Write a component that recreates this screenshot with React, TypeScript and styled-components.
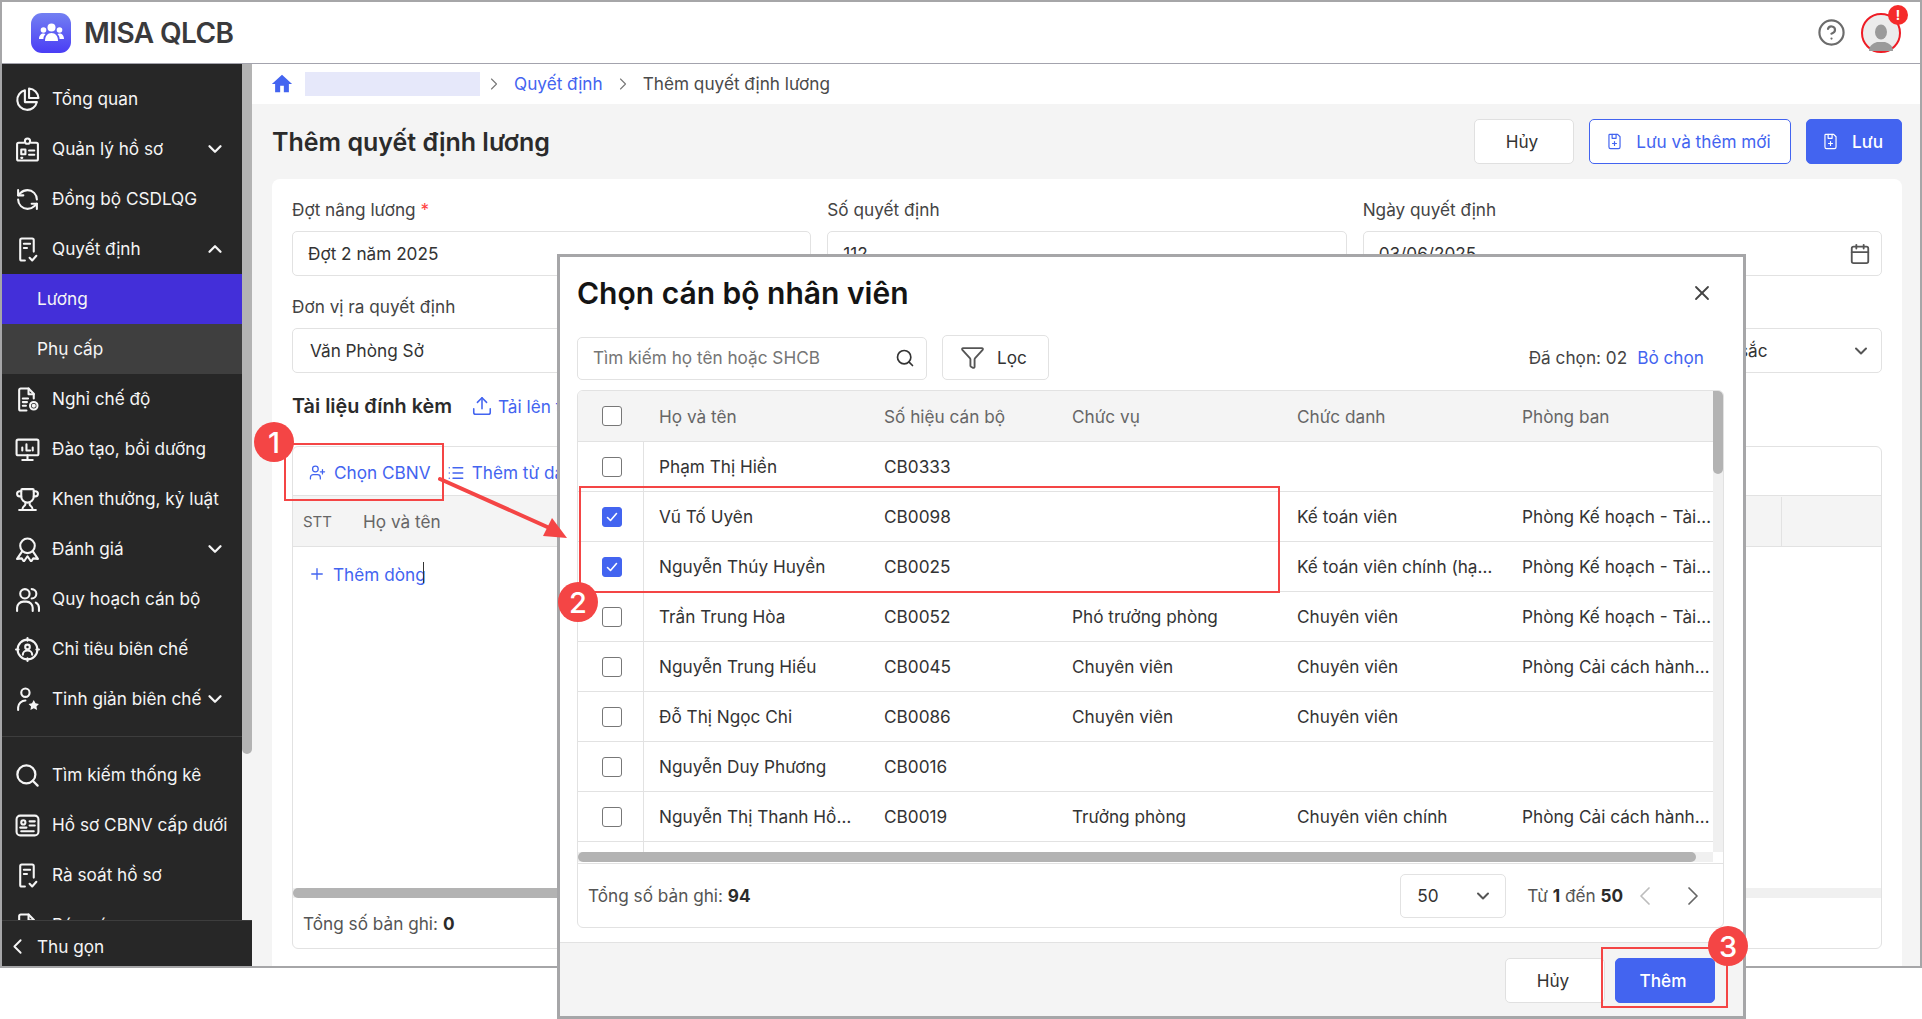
import styled, { createGlobalStyle } from 'styled-components';
import { ReactNode } from 'react';
import { ChevronDown, ChevronUp, ChevronLeft, ChevronRight, RefreshCcw, Trophy, Search, X, Plus, List, Upload, Calendar, UserPlus, CircleHelp, Funnel } from 'lucide-react';

const BLUE = '#4364f0';
const RED = '#f44545';
const LINE = '#e2e2e2';
const TEXT_SIZE = '17.2px';

const GlobalStyle = createGlobalStyle`
  html, body {
    margin: 0;
    background: #fff;
    overflow: hidden;
  }
  body, button, input {
    font-family: Inter, "Noto Sans", sans-serif;
    color: #333;
  }
  * { box-sizing: border-box; }
`;

const Screen = styled.div`
  position: relative;
  width: 1922px;
  height: 1019px;
  background: #fff;
  overflow: hidden;
`;

const Frame = styled.div`
  width: 100%;
  height: 968px;
  border: 2px solid #a6a6a8;
  display: flex;
  flex-direction: column;
`;

const TopBar = styled.header`
  height: 62px;
  flex: none;
  background: #fff;
  border-bottom: 1px solid #a3a3ad;
  display: flex;
  align-items: center;
  padding: 0 0 0 29px;
`;

const LogoMark = styled.div`
  width: 40px;
  height: 40px;
  border-radius: 11px;
  background: linear-gradient(180deg, #7380f2 0%, #4a3df5 100%);
  display: flex;
  align-items: center;
  justify-content: center;
`;

const LogoText = styled.div`
  margin-left: 13px;
  font-size: 28px;
  font-weight: 600;
  color: #3a3a3c;
  letter-spacing: -0.6px;
`;

const TopRight = styled.div`
  margin-left: auto;
  display: flex;
  align-items: center;
  color: #6c6c6c;
  gap: 15px;
  padding-right: 19px;
`;

const AvatarRing = styled.div`
  position: relative;
  width: 40px;
  height: 40px;
  border-radius: 50%;
  border: 2px solid #ee1c25;
  background: #ececec;
  display: flex;
  align-items: flex-end;
  justify-content: center;
`;

const AlertDot = styled.span`
  position: absolute;
  top: -10px;
  right: -9px;
  width: 20px;
  height: 20px;
  border-radius: 50%;
  background: #f52b2b;
  color: #fff;
  font-size: 13px;
  font-weight: 700;
  display: flex;
  align-items: center;
  justify-content: center;
`;

const Body = styled.div`
  flex: 1;
  display: flex;
  min-height: 0;
`;

const Sidebar = styled.aside`
  width: 250px;
  flex: none;
  display: flex;
  flex-direction: column;
`;

const SideScroll = styled.div`
  flex: 1;
  min-height: 0;
  display: flex;
  background: #f4f4f4;
`;

const Nav = styled.nav`
  width: 240px;
  background: #272727;
  padding-top: 10px;
  overflow: hidden;
`;

const NavRow = styled.div<{ $active?: boolean; $sub?: boolean }>`
  height: 50px;
  display: flex;
  align-items: center;
  padding-left: ${p => (p.$sub ? '35px' : '13px')};
  padding-right: 16px;
  color: #f5f5f5;
  font-size: ${TEXT_SIZE};
  line-height: 20px;
  white-space: nowrap;
  background: ${p => (p.$active ? '#432fd9' : p.$sub ? '#3f3f3f' : 'transparent')};
  svg {
    flex: none;
  }
`;

const NavIcon = styled.span`
  width: 25px;
  height: 25px;
  margin-right: 12px;
  display: flex;
  align-items: center;
  justify-content: center;
`;

const NavCaret = styled.span`
  margin-left: auto;
  display: flex;
`;

const NavDivider = styled.div`
  height: 1px;
  background: #3d3d3d;
  margin: 12px 0 13px;
`;

const SideTrack = styled.div`
  width: 10px;
  flex: none;
`;

const SideThumb = styled.div`
  height: 690px;
  background: #b3b3b3;
  border-radius: 0 0 5px 5px;
`;

const Collapse = styled.div`
  height: 46px;
  flex: none;
  background: #272727;
  border-top: 1px solid #3d3d3d;
  display: flex;
  align-items: center;
  gap: 7px;
  padding: 5px 0 0 3px;
  color: #f5f5f5;
  font-size: ${TEXT_SIZE};
`;

const Main = styled.main`
  flex: 1;
  min-width: 0;
  background: #f4f4f4;
  display: flex;
  flex-direction: column;
`;

const Crumbs = styled.div`
  height: 40px;
  flex: none;
  background: #fff;
  display: flex;
  align-items: center;
  padding-left: 19px;
  font-size: ${TEXT_SIZE};
  line-height: 20px;
  color: #4a4a4a;
`;

const Redacted = styled.div`
  width: 175px;
  height: 24px;
  margin: 0 -6px 0 12px;
  background: #e6e8fa;
`;

const CrumbSep = styled.span`
  display: flex;
  color: #777;
  margin: 0 10px;
`;

const CrumbLink = styled.span`
  color: ${BLUE};
`;

const TitleRow = styled.div`
  height: 75px;
  flex: none;
  display: flex;
  align-items: center;
  justify-content: space-between;
  padding: 0 18px 0 20px;
`;

const PageTitle = styled.h1`
  margin: 0;
  font-size: 25px;
  font-weight: 600;
  color: #2b2b2b;
`;

const Actions = styled.div`
  display: flex;
  gap: 15px;
`;

const Btn = styled.button<{ $kind?: 'default' | 'outline' | 'primary'; $w: number }>`
  width: ${p => p.$w}px;
  height: 45px;
  border-radius: 5px;
  font-size: ${TEXT_SIZE};
  font-weight: ${p => (p.$kind === 'primary' ? 500 : 400)};
  display: flex;
  align-items: center;
  justify-content: center;
  gap: 12px;
  padding: 0 4px 0 0;
  border: 1px solid ${p => (p.$kind === 'outline' ? BLUE : p.$kind === 'primary' ? BLUE : '#e0e0e0')};
  background: ${p => (p.$kind === 'primary' ? BLUE : '#fff')};
  color: ${p => (p.$kind === 'primary' ? '#fff' : p.$kind === 'outline' ? BLUE : '#333')};
`;

const Card = styled.section`
  flex: 1;
  min-height: 0;
  margin: 0 18px 0 20px;
  background: #fff;
  border-radius: 8px 8px 0 0;
  padding: 19px 20px 17px;
  display: flex;
  flex-direction: column;
`;

const FormGrid = styled.div`
  display: grid;
  grid-template-columns: repeat(3, 1fr);
  column-gap: 16px;
  row-gap: 19px;
`;

const Field = styled.div`
  display: flex;
  flex-direction: column;
  gap: 9px;
  min-width: 0;
`;

const FieldLabel = styled.label`
  height: 24px;
  line-height: 24px;
  font-size: ${TEXT_SIZE};
  color: #444;
  em {
    color: #f44;
    font-style: normal;
  }
`;

const InputBox = styled.div<{ $inset?: number }>`
  height: 45px;
  border: 1px solid ${LINE};
  border-radius: 5px;
  display: flex;
  align-items: center;
  justify-content: space-between;
  padding: 0 10px 0 ${p => p.$inset ?? 15}px;
  font-size: ${TEXT_SIZE};
  color: #333;
  background: #fff;
  white-space: nowrap;
  overflow: hidden;
`;

const AttachRow = styled.div`
  height: 30px;
  margin: 18px 0 25px;
  display: flex;
  align-items: center;
  font-size: ${TEXT_SIZE};
`;

const AttachTitle = styled.strong`
  font-weight: 600;
  font-size: 19.8px;
  color: #2b2b2b;
  margin-right: 19px;
`;

const LinkText = styled.span<{ $gap?: number }>`
  color: ${BLUE};
  display: inline-flex;
  align-items: center;
  gap: ${p => p.$gap ?? 5}px;
  font-size: ${TEXT_SIZE};
  white-space: nowrap;
`;

const DetailTable = styled.div`
  flex: 1;
  min-height: 0;
  border: 1px solid ${LINE};
  border-radius: 6px;
  display: flex;
  flex-direction: column;
  overflow: hidden;
`;

const DetailTools = styled.div`
  height: 49px;
  flex: none;
  border-bottom: 1px solid ${LINE};
  display: flex;
  align-items: center;
  padding: 3px 0 0 16px;
  gap: 16px;
`;

const DetailHead = styled.div`
  height: 51px;
  flex: none;
  background: #f4f4f4;
  border-bottom: 1px solid ${LINE};
  display: grid;
  grid-template-columns: 60px 1fr 100px;
  align-items: center;
  padding: 1px 0 0 10px;
  color: #666;
  font-size: ${TEXT_SIZE};
`;

const Stt = styled.span`
  font-size: 15px;
  color: #666;
`;

const HeadEnd = styled.span`
  height: 100%;
  border-left: 1px solid ${LINE};
`;

const DetailBody = styled.div`
  flex: 1;
  min-height: 0;
  padding: 15px 0 0 15px;
`;

const Caret = styled.span`
  display: inline-block;
  width: 1px;
  height: 21px;
  background: #333;
  margin-left: -3px;
`;

const HBar = styled.div`
  height: 10px;
  flex: none;
  background: #f0f0f0;
`;

const HThumb = styled.div<{ $w: string }>`
  width: ${p => p.$w};
  height: 100%;
  background: #b3b3b3;
  border-radius: 5px;
`;

const DetailFoot = styled.div`
  height: 50px;
  flex: none;
  display: flex;
  align-items: center;
  padding-left: 10px;
  font-size: ${TEXT_SIZE};
  color: #555;
  b {
    color: #2b2b2b;
    margin-left: 5px;
    font-weight: 700;
  }
`;

const Modal = styled.div`
  position: absolute;
  left: 557px;
  top: 254px;
  width: 1189px;
  height: 765px;
  border: 3px solid #a6a6a8;
  background: #fff;
  display: flex;
  flex-direction: column;
`;

const ModalHead = styled.div`
  height: 78px;
  flex: none;
  display: flex;
  align-items: center;
  justify-content: space-between;
  padding: 0 29px 6px 17px;
  color: #444;
`;

const ModalTitle = styled.h2`
  margin: 0;
  font-size: 30px;
  font-weight: 600;
  color: #141414;
`;

const ModalTools = styled.div`
  height: 45px;
  flex: none;
  display: flex;
  align-items: center;
  padding: 0 39px 0 17px;
`;

const SearchBox = styled.div`
  width: 350px;
  height: 43px;
  margin-top: 2px;
  border: 1px solid ${LINE};
  border-radius: 5px;
  display: flex;
  align-items: center;
  justify-content: space-between;
  padding: 0 11px 2px 15px;
  font-size: ${TEXT_SIZE};
  color: #757575;
`;

const FilterBtn = styled.button`
  width: 107px;
  height: 45px;
  margin-left: 15px;
  border: 1px solid ${LINE};
  border-radius: 5px;
  background: #fff;
  display: flex;
  align-items: center;
  justify-content: center;
  gap: 12px;
  padding: 0 4px 0 0;
  font-size: ${TEXT_SIZE};
  color: #333;
`;

const Picked = styled.div`
  margin-left: auto;
  display: flex;
  gap: 10px;
  font-size: ${TEXT_SIZE};
  color: #444;
`;

const PickGrid = styled.div`
  margin: 10px 19px 0 17px;
  height: 538px;
  border: 1px solid ${LINE};
  border-radius: 6px;
  overflow: hidden;
  flex: none;
  display: flex;
  flex-direction: column;
`;

const PickScroll = styled.div`
  flex: none;
  height: 472px;
  display: grid;
  grid-template-columns: 1fr 10px;
  grid-template-rows: 461px 10px;
`;

const PickRows = styled.div`
  overflow: hidden;
  min-width: 0;
`;

const PickRow = styled.div<{ $head?: boolean }>`
  height: ${p => (p.$head ? '51px' : '50px')};
  display: grid;
  grid-template-columns: 66px 225px 188px 225px 225px 1fr;
  align-items: stretch;
  background: ${p => (p.$head ? '#f4f4f4' : '#fff')};
  border-bottom: 1px solid ${LINE};
  color: ${p => (p.$head ? '#666' : '#333')};
  font-size: ${TEXT_SIZE};
`;

const CheckCell = styled.div<{ $head?: boolean }>`
  display: flex;
  align-items: center;
  padding-left: 24px;
  border-right: ${p => (p.$head ? 'none' : `1px solid ${LINE}`)};
`;

const TextCell = styled.div`
  display: flex;
  align-items: center;
  padding: 0 11px 0 15px;
  min-width: 0;
  span {
    overflow: hidden;
    white-space: nowrap;
    text-overflow: ellipsis;
  }
  &:nth-child(2) {
    padding-right: 14px;
  }
  &:last-child {
    padding-right: 0;
  }
`;

const Check = styled.span<{ $on?: boolean }>`
  width: 20px;
  height: 20px;
  border-radius: 3px;
  border: 1px solid ${p => (p.$on ? BLUE : '#777')};
  background: ${p => (p.$on ? BLUE : '#fff')};
  display: flex;
  align-items: center;
  justify-content: center;
`;

const VTrack = styled.div`
  background: #f0f0f0;
`;

const VThumb = styled.div`
  height: 83px;
  background: #b3b3b3;
  border-radius: 0 0 5px 5px;
`;

const CornerFill = styled.div`
  background: #fff;
`;

const PickFoot = styled.div`
  flex: 1;
  border-top: 1px solid ${LINE};
  display: flex;
  align-items: center;
  padding: 0 14px 0 10px;
  font-size: ${TEXT_SIZE};
  color: #555;
  b {
    font-weight: 700;
    color: #2b2b2b;
  }
`;

const PageSize = styled.div`
  margin-left: auto;
  width: 106px;
  height: 44px;
  border: 1px solid ${LINE};
  border-radius: 5px;
  display: flex;
  align-items: center;
  justify-content: space-between;
  padding: 0 12px 0 16px;
  color: #333;
`;

const RangeText = styled.span`
  margin-left: 21px;
`;

const Pager = styled.span<{ $off?: boolean }>`
  display: flex;
  color: ${p => (p.$off ? '#bdbdbd' : '#666')};
  margin-left: ${p => (p.$off ? '6px' : '16px')};
`;

const ModalFoot = styled.div`
  flex: 1;
  margin-top: 14px;
  background: #f4f4f4;
  border-top: 1px solid ${LINE};
  display: flex;
  justify-content: flex-end;
  align-items: flex-start;
  gap: 10px;
  padding: 15px 28px 0 0;
`;

const Callout = styled.div<{ $x: number; $y: number; $w: number; $h: number }>`
  position: absolute;
  left: ${p => p.$x}px;
  top: ${p => p.$y}px;
  width: ${p => p.$w}px;
  height: ${p => p.$h}px;
  border: 2px solid ${RED};
`;

const Step = styled.div<{ $x: number; $y: number }>`
  position: absolute;
  left: ${p => p.$x - 20}px;
  top: ${p => p.$y - 20}px;
  width: 40px;
  height: 40px;
  border-radius: 50%;
  background: ${RED};
  color: #fff;
  font-size: 29px;
  font-weight: 500;
  display: flex;
  align-items: center;
  justify-content: center;
`;

const ArrowSvg = styled.svg`
  position: absolute;
  left: 430px;
  top: 470px;
`;

const Line = ({ children, size = 25, stroke = 2 }: { children: ReactNode; size?: number; stroke?: number }) => (
  <svg width={size} height={size} viewBox="0 0 24 24" fill="none" stroke="currentColor" strokeWidth={stroke} strokeLinecap="round" strokeLinejoin="round">
    {children}
  </svg>
);

const HomeGlyph = () => (
  <svg width="22" height="22" viewBox="0 0 24 24" fill={BLUE}>
    <path d="M10 21v-7h4v7h5.500v-9H23L12 2 1 12h3.500v9Z" />
  </svg>
);

const PieIcon = () => (
  <Line>
    <path d="M9.5 3.2A9.5 9.5 0 1 0 21 14.5H9.5Z" />
    <path d="M13.5 1.5A9.5 9.5 0 0 1 22.5 10.5H13.5Z" />
  </Line>
);

const ProfileIcon = () => (
  <Line>
    <path d="M8.5 5.5H3.5A1.5 1.5 0 0 0 2 7v14a1.5 1.5 0 0 0 1.5 1.5h17A1.5 1.5 0 0 0 22 21V7a1.5 1.5 0 0 0-1.5-1.5h-5" />
    <circle cx="12" cy="4" r="2.5" />
    <rect x="6" y="12" width="4" height="4.5" />
    <path d="M13.5 13h5M13.5 17h5M6 20h1" />
  </Line>
);

const DecisionIcon = () => (
  <Line>
    <path d="M9.5 22.5H6.5A1.5 1.5 0 0 1 5 21V3A1.5 1.5 0 0 1 6.5 1.5h10A1.5 1.5 0 0 1 18 3v11" />
    <path d="M8.5 6.5h6M8.5 10.5h3" />
    <path d="M14 20l2.5 2.5 4-4.5" />
  </Line>
);

const LeaveIcon = () => (
  <Line>
    <path d="M11 22.5H5.5A1.5 1.5 0 0 1 4 21V3a1.5 1.5 0 0 1 1.5-1.5H13l5 5V11" />
    <path d="M13 1.5V7h5" />
    <path d="M7.5 11h5M7.5 14.5h4M7.5 18h3" />
    <circle cx="18" cy="18" r="3.6" />
    <circle cx="18" cy="18" r="1" />
  </Line>
);

const ScreenIcon = () => (
  <Line>
    <rect x="1.5" y="2.5" width="21" height="15" rx="1.5" />
    <path d="M7 13V10M11 13V7M14.5 13h-2M17 13v-3M12 17.5v4.5M7 22h10" />
  </Line>
);

const RibbonIcon = () => (
  <Line>
    <circle cx="12" cy="8.500" r="7" />
    <path d="M7 13.500L2 21l4.500-.5L8.500 23.500 12 18.500l3.500 5 2-3 4.500.5-5-7.500" />
  </Line>
);

const PeopleIcon = () => (
  <Line>
    <circle cx="9.5" cy="6.5" r="4.5" />
    <path d="M2 23v-3a6 6 0 0 1 6-6h3a6 6 0 0 1 6 6v3" />
    <path d="M16 2a4.5 4.5 0 0 1 0 9" />
    <path d="M20 15a5.5 5.5 0 0 1 3 5v3" />
  </Line>
);

const TargetIcon = () => (
  <Line>
    <circle cx="12" cy="12" r="9.5" />
    <path d="M12 1v2.5M12 20.5V23M1 12h2.5M20.5 12H23" />
    <circle cx="12" cy="9.5" r="2.2" />
    <path d="M7.5 17a4.5 4 0 0 1 9 0" />
  </Line>
);

const StarPersonIcon = () => (
  <Line>
    <circle cx="10" cy="5.5" r="4" />
    <path d="M3 22v-2.5A7 7 0 0 1 10 13" />
    <path d="M18 12.5l1.7 3.2 3.3.5-2.4 2.4.6 3.4-3.2-1.7-3.2 1.7.6-3.4-2.4-2.4 3.3-.5Z" fill="currentColor" stroke="none" />
  </Line>
);

const CardIcon = () => (
  <Line>
    <rect x="1.5" y="2.5" width="21" height="19" rx="3.5" />
    <circle cx="8" cy="9" r="2" />
    <path d="M5 14h6M14 8h5M14 12h5M6 17.5h12" />
  </Line>
);

const SaveIcon = () => (
  <Line size={19} stroke={1.5}>
    <path d="M6 3h10l3 3v13a2 2 0 0 1-2 2H7a2 2 0 0 1-2-2V4a1 1 0 0 1 1-1Z" />
    <path d="M9 3v5h5V3M12 12v5M9.5 14.5h5" />
  </Line>
);

const LogoPeople = () => (
  <svg width="27" height="22" viewBox="0 0 27 22" fill="#fff">
    <circle cx="13.5" cy="5.5" r="4" />
    <circle cx="5.5" cy="8" r="2.8" />
    <circle cx="21.5" cy="8" r="2.8" />
    <path d="M7 19c0-5 2.5-8 6.5-8s6.5 3 6.5 8Z" />
    <path d="M1 17c0-3.500 2-5.500 4.500-5.500 1 0 1.500.2 2 .5C6 13.500 5.500 15 5.400 17Z" />
    <path d="M26 17c0-3.500-2-5.500-4.500-5.500-1 0-1.500.2-2 .5 1.500 1.500 2 3 2.100 5Z" />
  </svg>
);

const AvatarPerson = () => (
  <svg width="30" height="30" viewBox="0 0 30 30" fill="#9a9a9a">
    <ellipse cx="15" cy="11" rx="6" ry="7.5" />
    <path d="M3 30c0-6 5-8 8-9h8c3 1 8 3 8 9Z" />
  </svg>
);

const TickMark = () => (
  <svg width="14" height="14" viewBox="0 0 14 14" fill="none" stroke="#fff" strokeWidth="1.6" strokeLinecap="round" strokeLinejoin="round">
    <path d="M2.500 7.500l3 3 6-7" />
  </svg>
);

interface NavEntry {
  label: string;
  icon: ReactNode;
  caret?: 'up' | 'down';
}

const navTop: NavEntry[] = [
  { label: 'Tổng quan', icon: <PieIcon /> },
  { label: 'Quản lý hồ sơ', icon: <ProfileIcon />, caret: 'down' },
  { label: 'Đồng bộ CSDLQG', icon: <RefreshCcw size={25} strokeWidth={2} /> },
  { label: 'Quyết định', icon: <DecisionIcon />, caret: 'up' },
];

const navMid: NavEntry[] = [
  { label: 'Nghỉ chế độ', icon: <LeaveIcon /> },
  { label: 'Đào tạo, bồi dưỡng', icon: <ScreenIcon /> },
  { label: 'Khen thưởng, kỷ luật', icon: <Trophy size={25} strokeWidth={2} /> },
  { label: 'Đánh giá', icon: <RibbonIcon />, caret: 'down' },
  { label: 'Quy hoạch cán bộ', icon: <PeopleIcon /> },
  { label: 'Chỉ tiêu biên chế', icon: <TargetIcon /> },
  { label: 'Tinh giản biên chế', icon: <StarPersonIcon />, caret: 'down' },
];

const navBottom: NavEntry[] = [
  { label: 'Tìm kiếm thống kê', icon: <Search size={27} strokeWidth={2} /> },
  { label: 'Hồ sơ CBNV cấp dưới', icon: <CardIcon /> },
  { label: 'Rà soát hồ sơ', icon: <DecisionIcon /> },
  { label: 'Báo cáo', icon: <LeaveIcon /> },
];

const NavItem = ({ entry }: { entry: NavEntry }) => (
  <NavRow>
    <NavIcon>{entry.icon}</NavIcon>
    {entry.label}
    {entry.caret && (
      <NavCaret>
        {entry.caret === 'up' ? <ChevronUp size={22} strokeWidth={2.5} /> : <ChevronDown size={22} strokeWidth={2.5} />}
      </NavCaret>
    )}
  </NavRow>
);

const staff = [
  { name: 'Phạm Thị Hiền', code: 'CB0333', role: '', title: '', dept: '' },
  { name: 'Vũ Tố Uyên', code: 'CB0098', role: '', title: 'Kế toán viên', dept: 'Phòng Kế hoạch - Tài chính', on: true },
  { name: 'Nguyễn Thúy Huyền', code: 'CB0025', role: '', title: 'Kế toán viên chính (hạng III)', dept: 'Phòng Kế hoạch - Tài chính', on: true },
  { name: 'Trần Trung Hòa', code: 'CB0052', role: 'Phó trưởng phòng', title: 'Chuyên viên', dept: 'Phòng Kế hoạch - Tài chính' },
  { name: 'Nguyễn Trung Hiếu', code: 'CB0045', role: 'Chuyên viên', title: 'Chuyên viên', dept: 'Phòng Cải cách hành chính' },
  { name: 'Đỗ Thị Ngọc Chi', code: 'CB0086', role: 'Chuyên viên', title: 'Chuyên viên', dept: '' },
  { name: 'Nguyễn Duy Phương', code: 'CB0016', role: '', title: '', dept: '' },
  { name: 'Nguyễn Thị Thanh Hồng', code: 'CB0019', role: 'Trưởng phòng', title: 'Chuyên viên chính', dept: 'Phòng Cải cách hành chính' },
  { name: '', code: '', role: '', title: '', dept: '' },
];

const App = () => {
  return (
    <Screen>
      <GlobalStyle />
      <Frame>
        <TopBar>
          <LogoMark>
            <LogoPeople />
          </LogoMark>
          <LogoText>MISA QLCB</LogoText>
          <TopRight>
            <CircleHelp size={29} strokeWidth={1.8} />
            <AvatarRing>
              <AvatarPerson />
              <AlertDot>!</AlertDot>
            </AvatarRing>
          </TopRight>
        </TopBar>
        <Body>
          <Sidebar>
            <SideScroll>
              <Nav>
                {navTop.map(n => <NavItem key={n.label} entry={n} />)}
                <NavRow $sub $active>Lương</NavRow>
                <NavRow $sub>Phụ cấp</NavRow>
                {navMid.map(n => <NavItem key={n.label} entry={n} />)}
                <NavDivider />
                {navBottom.map(n => <NavItem key={n.label} entry={n} />)}
              </Nav>
              <SideTrack>
                <SideThumb />
              </SideTrack>
            </SideScroll>
            <Collapse>
              <ChevronLeft size={25} strokeWidth={1.8} />
              Thu gọn
            </Collapse>
          </Sidebar>
          <Main>
            <Crumbs>
              <HomeGlyph />
              <Redacted />
              <CrumbSep><ChevronRight size={20} strokeWidth={1.3} /></CrumbSep>
              <CrumbLink>Quyết định</CrumbLink>
              <CrumbSep><ChevronRight size={20} strokeWidth={1.3} /></CrumbSep>
              Thêm quyết định lương
            </Crumbs>
            <TitleRow>
              <PageTitle>Thêm quyết định lương</PageTitle>
              <Actions>
                <Btn $w={100}>Hủy</Btn>
                <Btn $w={202} $kind="outline"><SaveIcon />Lưu và thêm mới</Btn>
                <Btn $w={96} $kind="primary"><SaveIcon />Lưu</Btn>
              </Actions>
            </TitleRow>
            <Card>
              <FormGrid>
                <Field>
                  <FieldLabel>Đợt nâng lương <em>*</em></FieldLabel>
                  <InputBox>Đợt 2 năm 2025</InputBox>
                </Field>
                <Field>
                  <FieldLabel>Số quyết định</FieldLabel>
                  <InputBox>112</InputBox>
                </Field>
                <Field>
                  <FieldLabel>Ngày quyết định</FieldLabel>
                  <InputBox>03/06/2025<Calendar size={22} strokeWidth={2} color="#555" /></InputBox>
                </Field>
                <Field>
                  <FieldLabel>Đơn vị ra quyết định</FieldLabel>
                  <InputBox $inset={17}>Văn Phòng Sở</InputBox>
                </Field>
                <Field>
                  <FieldLabel>Người ký</FieldLabel>
                  <InputBox />
                </Field>
                <Field>
                  <FieldLabel>Xếp loại</FieldLabel>
                  <InputBox>Hoàn thành tốt nhiệm vụ – Hoàn thành: xuất sắc<ChevronDown size={20} strokeWidth={2.4} color="#555" /></InputBox>
                </Field>
              </FormGrid>
              <AttachRow>
                <AttachTitle>Tài liệu đính kèm</AttachTitle>
                <LinkText><Upload size={22} strokeWidth={1.7} />Tải lên tệp</LinkText>
              </AttachRow>
              <DetailTable>
                <DetailTools>
                  <LinkText $gap={8}><UserPlus size={17} strokeWidth={1.8} />Chọn CBNV</LinkText>
                  <LinkText $gap={7}><List size={18} strokeWidth={1.8} />Thêm từ danh sách</LinkText>
                </DetailTools>
                <DetailHead>
                  <Stt>STT</Stt>
                  <span>Họ và tên</span>
                  <HeadEnd />
                </DetailHead>
                <DetailBody>
                  <LinkText $gap={7}><Plus size={18} strokeWidth={1.8} />Thêm dòng</LinkText>
                  <Caret />
                </DetailBody>
                <HBar><HThumb $w="75%" /></HBar>
                <DetailFoot>Tổng số bản ghi:<b>0</b></DetailFoot>
              </DetailTable>
            </Card>
          </Main>
        </Body>
      </Frame>

      <Modal>
        <ModalHead>
          <ModalTitle>Chọn cán bộ nhân viên</ModalTitle>
          <X size={24} strokeWidth={1.8} />
        </ModalHead>
        <ModalTools>
          <SearchBox>
            Tìm kiếm họ tên hoặc SHCB
            <Search size={20} strokeWidth={2} color="#333" />
          </SearchBox>
          <FilterBtn><Funnel size={25} strokeWidth={1.8} color="#555" />Lọc</FilterBtn>
          <Picked>
            <span>Đã chọn: 02</span>
            <LinkText>Bỏ chọn</LinkText>
          </Picked>
        </ModalTools>
        <PickGrid>
          <PickScroll>
            <PickRows>
              <PickRow $head>
                <CheckCell $head><Check /></CheckCell>
                <TextCell><span>Họ và tên</span></TextCell>
                <TextCell><span>Số hiệu cán bộ</span></TextCell>
                <TextCell><span>Chức vụ</span></TextCell>
                <TextCell><span>Chức danh</span></TextCell>
                <TextCell><span>Phòng ban</span></TextCell>
              </PickRow>
              {staff.map((s, i) => (
                <PickRow key={i}>
                  <CheckCell>{s.name && <Check $on={s.on}>{s.on && <TickMark />}</Check>}</CheckCell>
                  <TextCell><span>{s.name}</span></TextCell>
                  <TextCell><span>{s.code}</span></TextCell>
                  <TextCell><span>{s.role}</span></TextCell>
                  <TextCell><span>{s.title}</span></TextCell>
                  <TextCell><span>{s.dept}</span></TextCell>
                </PickRow>
              ))}
            </PickRows>
            <VTrack><VThumb /></VTrack>
            <HBar><HThumb $w="98.5%" /></HBar>
            <CornerFill />
          </PickScroll>
          <PickFoot>
            <span>Tổng số bản ghi: <b>94</b></span>
            <PageSize>50<ChevronDown size={20} strokeWidth={2.4} color="#555" /></PageSize>
            <RangeText>Từ <b>1</b> đến <b>50</b></RangeText>
            <Pager $off><ChevronLeft size={32} strokeWidth={1.3} /></Pager>
            <Pager><ChevronRight size={32} strokeWidth={1.3} /></Pager>
          </PickFoot>
        </PickGrid>
        <ModalFoot>
          <Btn $w={100}>Hủy</Btn>
          <Btn $w={100} $kind="primary">Thêm</Btn>
        </ModalFoot>
      </Modal>

      <Callout $x={284} $y={443} $w={160} $h={58} />
      <Callout $x={579} $y={486} $w={701} $h={107} />
      <Callout $x={1601} $y={947} $w={127} $h={61} />
      <ArrowSvg width="150" height="80" viewBox="0 0 150 80">
        <path d="M10 9L124 60" stroke={RED} strokeWidth="4" strokeLinecap="round" />
        <path d="M137 68L113 66L122 48Z" fill={RED} />
      </ArrowSvg>
      <Step $x={274} $y={442}>1</Step>
      <Step $x={578} $y={602}>2</Step>
      <Step $x={1728} $y={946}>3</Step>
    </Screen>
  );
};

export default App;
